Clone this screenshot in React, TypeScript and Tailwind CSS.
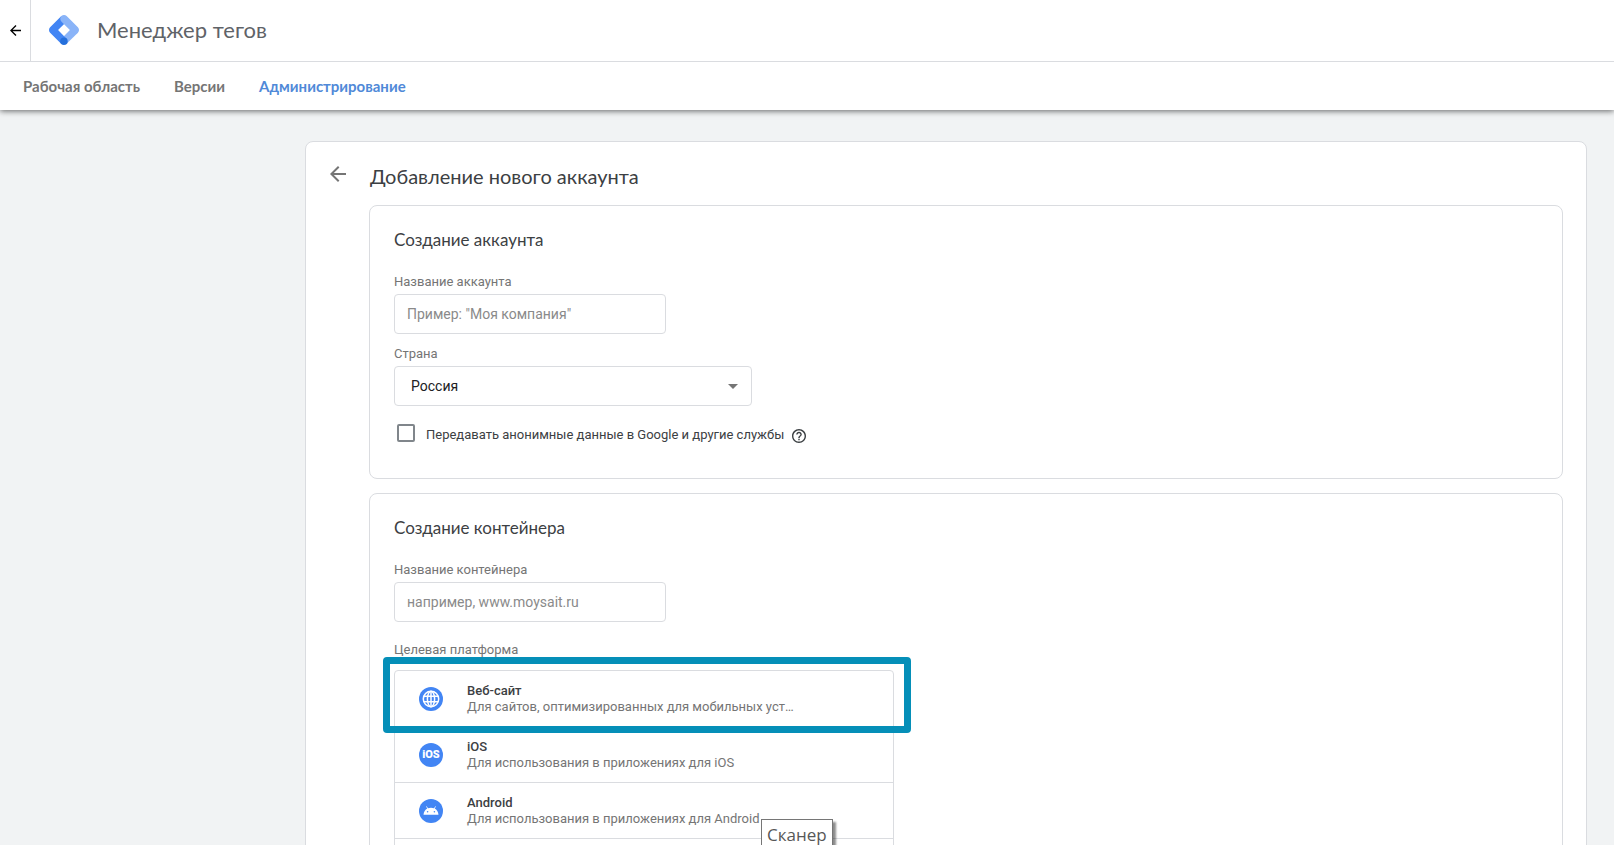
import type { ReactNode } from "react";

const heading = "font-['Lato','Roboto',sans-serif]";

function TagManagerLogo() {
  return (
    <svg className="size-[30px]" viewBox="0 0 2469 2469" aria-hidden="true">
      <path d="M1449.8 2376L1021 1946.7l921.1-930.5 436.7 436.6z" fill="#8ab4f8" />
      <path d="M1452.9 527.1L1016.3 90.4 90.5 1016.2c-120.6 120.5-120.7 315.8-.2 436.4l.2.2 925.8 925.8 428.3-430.3L745 1235.1z" fill="#4285f4" />
      <path d="M2378.7 1016.2L1452.9 90.4c-120.6-120.6-316.1-120.6-436.7 0-120.6 120.6-120.6 316.1 0 436.6l926.3 925.8c120.6 120.6 316.1 120.6 436.6 0 120.6-120.6 120.6-316.1 0-436.6z" fill="#8ab4f8" />
      <circle cx="1231.2" cy="2162.9" r="306" fill="#246fdb" />
    </svg>
  );
}

function ArrowBack({ className }: { className: string }) {
  return (
    <svg className={className} viewBox="4 4 16 16" fill="currentColor" aria-hidden="true">
      <path d="M20 11H7.830l5.590-5.590L12 4l-8 8 8 8 1.410-1.410L7.830 13H20z" />
    </svg>
  );
}

function HelpIcon() {
  return (
    <svg className="size-[14px]" viewBox="2 2 20 20" fill="currentColor" aria-hidden="true">
      <path d="M11 18h2v-2h-2v2zm1-16C6.480 2 2 6.480 2 12s4.480 10 10 10 10-4.480 10-10S17.520 2 12 2zm0 18c-4.410 0-8-3.590-8-8s3.590-8 8-8 8 3.590 8 8-3.590 8-8 8zm0-14c-2.210 0-4 1.790-4 4h2c0-1.100.9-2 2-2s2 .9 2 2c0 2-3 1.750-3 5h2c0-2.250 3-2.500 3-5 0-2.210-1.790-4-4-4z" />
    </svg>
  );
}

function GlobeIcon() {
  return (
    <svg className="size-[18px]" viewBox="0 0 18 18" fill="none" stroke="#fff" strokeWidth="1.5" aria-hidden="true">
      <circle cx="9" cy="9" r="7.700" />
      <ellipse cx="9" cy="9" rx="3.600" ry="7.700" />
      <path d="M9 1.300v15.400M2 6.300h14M2 11.700h14" />
    </svg>
  );
}

function AndroidIcon() {
  return (
    <svg className="h-[9px] w-4" viewBox="0 0 16 9" aria-hidden="true">
      <path d="M.5 8.800C.7 6.100 2.200 3.800 4.300 2.600L3 .6l.6-.4 1.400 2.100a7.800 7.800 0 0 1 6 0L12.400.2l.6.400-1.300 2c2.100 1.200 3.600 3.500 3.800 6.200z" fill="#fff" />
      <circle cx="4.600" cy="5.800" r=".8" fill="#4285f4" />
      <circle cx="11.400" cy="5.800" r=".8" fill="#4285f4" />
    </svg>
  );
}

const platforms: { title: string; text: string; icon: ReactNode }[] = [
  { title: "Веб-сайт", text: "Для сайтов, оптимизированных для мобильных уст…", icon: <GlobeIcon /> },
  {
    title: "iOS",
    text: "Для использования в приложениях для iOS",
    icon: <span className="font-['Liberation_Sans_Narrow','Roboto',sans-serif] text-[11px] leading-none font-black">iOS</span>,
  },
  { title: "Android", text: "Для использования в приложениях для Android", icon: <AndroidIcon /> },
];

function Panel({ title, children }: { title: string; children: ReactNode }) {
  return (
    <section className="rounded-lg border border-[#dadce0] px-6 pt-[22px]">
      <h2 className={`${heading} pb-0.5 text-[17px] leading-6 text-[#3c4043]`}>{title}</h2>
      {children}
    </section>
  );
}

function TextField({ id, label, placeholder }: { id: string; label: string; placeholder: string }) {
  return (
    <div className="mt-5 flex flex-col">
      <label htmlFor={id} className="pb-1 text-[13px] leading-4 text-[#757575]">{label}</label>
      <input
        id={id}
        type="text"
        placeholder={placeholder}
        className="h-10 w-[272px] rounded border border-[#dadce0] px-3 text-sm text-[#202124] outline-none placeholder:text-[#8a8a8a]"
      />
    </div>
  );
}

export default function App() {
  return (
    <div className="flex h-screen flex-col overflow-hidden bg-[#f1f3f4] font-['Roboto',sans-serif] text-[#3c4043]">
      <header className="relative z-10 bg-white shadow-[0_1px_6px_rgba(0,0,0,0.6)]">
        <div className="flex h-[62px] items-stretch border-b border-[#dadce0]">
          <button type="button" aria-label="Назад" className="flex w-[31px] items-center justify-center border-r border-[#dadce0] text-black">
            <ArrowBack className="size-[11px]" />
          </button>
          <div className="flex items-center gap-[18px] pb-0.5 pl-[18px]">
            <TagManagerLogo />
            <span className={`${heading} text-[22px] leading-7 text-[#5f6368]`}>Менеджер тегов</span>
          </div>
        </div>
        <nav className={`${heading} flex h-12 items-center gap-[34px] pl-[23px] text-[15px] font-bold text-[#757575]`}>
          <a href="#workspace">Рабочая область</a>
          <a href="#versions">Версии</a>
          <a href="#admin" aria-current="page" className="text-[#5089d8]">Администрирование</a>
        </nav>
      </header>

      <main className="flex-1 overflow-y-auto pt-[31px] pr-[27px] pl-[305px] [scrollbar-width:none]">
        <div className="rounded-lg border border-[#dadce0] bg-white pr-[23px] pb-6 pl-[63px]">
          <div className="-ml-10 flex h-[63px] items-center gap-6 pt-1 pl-px">
            <button type="button" aria-label="Вернуться" className="pb-1 text-[#757575]">
              <ArrowBack className="size-4" />
            </button>
            <h1 className={`${heading} text-[20px] leading-7 text-[#3c4043]`}>Добавление нового аккаунта</h1>
          </div>

          <div className="flex flex-col gap-[14px]">
            <Panel title="Создание аккаунта">
              <TextField id="account" label="Название аккаунта" placeholder={'Пример: "Моя компания"'} />
              <div className="mt-3 flex flex-col">
                <label htmlFor="country" className="pb-1 text-[13px] leading-4 text-[#757575]">Страна</label>
                <div className="relative w-[358px]">
                  <select id="country" className="h-10 w-full appearance-none rounded border border-[#dadce0] bg-white px-4 text-sm text-[#202124]">
                    <option>Россия</option>
                  </select>
                  <svg className="pointer-events-none absolute top-[18px] right-[14px] h-[5px] w-[10px]" viewBox="0 0 10 5" aria-hidden="true">
                    <path d="M0 0h10L5 5z" fill="#757575" />
                  </svg>
                </div>
              </div>
              <div className="mt-[18px] mb-9 flex h-[18px] items-center pl-[3px]">
                <input id="share" type="checkbox" className="size-[18px] appearance-none rounded-[2px] border-2 border-[#80868b] bg-white" />
                <div className="flex items-center gap-2 pt-1 pl-[11px]">
                  <label htmlFor="share" className="text-[13px] leading-5 text-[#3c4043]">
                    Передавать анонимные данные в Google и другие службы
                  </label>
                  <button type="button" aria-label="Справка" className="pt-0.5">
                    <HelpIcon />
                  </button>
                </div>
              </div>
            </Panel>

            <Panel title="Создание контейнера">
              <TextField id="container" label="Название контейнера" placeholder="например, www.moysait.ru" />
              <h3 className="mt-5 text-[13px] leading-4 text-[#757575]">Целевая платформа</h3>
              <div className="relative mt-3 w-[500px]">
                <ul className="rounded border border-[#dadce0] pb-14">
                  {platforms.map((p) => (
                    <li key={p.title} className="border-b border-[#dadce0]">
                      <button type="button" className="flex h-[55px] w-full items-center px-6 text-left">
                        <span className="flex size-6 items-center justify-center rounded-full bg-[#4285f4] text-white">{p.icon}</span>
                        <span className="flex flex-col pl-6 text-[13px] leading-4">
                          <span className="font-medium text-[#3c4043]">{p.title}</span>
                          <span className="text-[#757575]">{p.text}</span>
                        </span>
                      </button>
                    </li>
                  ))}
                </ul>
                <div className="pointer-events-none absolute -top-[13px] -right-[17px] -left-[11px] h-[76px] rounded border-[7px] border-[#058fb8]" />
                <div role="tooltip" className="absolute top-[149px] left-[367px] border border-[#767676] bg-white px-[5px] py-[3px] font-['Open_Sans',sans-serif] text-[17px] leading-6 text-[#575757] shadow-[3px_3px_2px_rgba(0,0,0,0.45)]">
                  Сканер
                </div>
              </div>
            </Panel>
          </div>
        </div>
      </main>
    </div>
  );
}
